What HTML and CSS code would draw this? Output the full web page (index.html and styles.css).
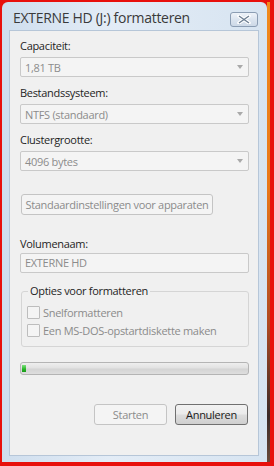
FILE: index.html
```html
<!DOCTYPE html>
<html>
  <head>
    <meta charset="UTF-8" />
    <link rel="stylesheet" href="styles.css">
  </head>
  <body>
    <div class="screen">
      <div class="window">
        <div class="titlebar">
          <span class="title">EXTERNE HD (J:) formatteren</span>
          <div class="close">
            <svg width="14" height="9" viewBox="0 0 14 9">
              <path d="M2 1 L12 8 M12 1 L2 8" stroke="#ffffff" stroke-width="3.4" stroke-linecap="round" />
              <path d="M2 1 L12 8 M12 1 L2 8" stroke="#6d7f93" stroke-width="1.4" />
            </svg>
          </div>
        </div>

        <div class="client">
          <p class="label first">Capaciteit:</p>
          <div class="combo">
            <span>1,81 TB</span>
            <i class="arrow"></i>
          </div>

          <p class="label">Bestandssysteem:</p>
          <div class="combo">
            <span>NTFS (standaard)</span>
            <i class="arrow"></i>
          </div>

          <p class="label">Clustergrootte:</p>
          <div class="combo">
            <span>4096 bytes</span>
            <i class="arrow"></i>
          </div>

          <div class="button wide disabled">Standaardinstellingen voor apparaten</div>

          <p class="label volume">Volumenaam:</p>
          <div class="textbox">EXTERNE HD</div>

          <div class="group">
            <span class="legend">Opties voor formatteren</span>
            <div class="check">
              <i class="box"></i>
              <span>Snelformatteren</span>
            </div>
            <div class="check">
              <i class="box"></i>
              <span>Een MS-DOS-opstartdiskette maken</span>
            </div>
          </div>

          <div class="progress">
            <div class="fill"></div>
          </div>

          <div class="actions">
            <div class="button disabled">Starten</div>
            <div class="button default">Annuleren</div>
          </div>
        </div>
      </div>
      <div class="strip"></div>
    </div>
  </body>
</html>
```

FILE: styles.css
```css
* {
  box-sizing: border-box;
}

body {
  margin: 0;
  padding: 0;
  background-color: #e8100c;
  font-family: "Open Sans", "Noto Sans", sans-serif;
  font-size: 11px;
  letter-spacing: -0.3px;
  color: #1e1e1e;
}

.screen {
  display: flex;
  width: 274px;
  height: 466px;
  padding: 2px 4px 4px 2px;
}

.strip {
  width: 3px;
  background: linear-gradient(180deg, #f08a1c 0%, #e9781a 40%, #b04a22 70%, #3a2a28 90%, #6a4a3a 100%);
}

.window {
  display: flex;
  flex-direction: column;
  width: 265px;
  height: 460px;
  padding: 0 8px 6px 7px;
  border-radius: 6px 6px 0 0;
  background-color: #d9e5f2;
  background-image: linear-gradient(90deg, #cfdeee 0%, #e3ecf6 40%, #d7e4f1 100%);
}

/* title bar */
.titlebar {
  display: flex;
  align-items: center;
  justify-content: space-between;
  height: 28px;
  padding: 0 0 0 4px;
}

.title {
  font-size: 14px;
  color: #3a3a3a;
  letter-spacing: -0.3px;
  padding-top: 2px;
}

.close {
  display: flex;
  align-items: center;
  justify-content: center;
  width: 28px;
  height: 15px;
  margin-right: 1px;
  margin-top: 6px;
  border: 1px solid #8b9db3;
  border-radius: 3px;
  background: linear-gradient(180deg, #eef3f9 0%, #dbe4ef 50%, #cdd9e7 100%);
}

/* client area */
.client {
  flex: 1;
  display: flex;
  flex-direction: column;
  padding: 0 9px 0 10px;
  border: 1px solid #b6c6d8;
  background-color: #f0f0f0;
}

.label {
  margin: 0;
  margin-top: 8px;
  height: 15px;
  line-height: 15px;
  white-space: nowrap;
}

.label.first {
  margin-top: 7px;
}

.label.volume {
  margin-top: 21px;
}

.combo {
  display: flex;
  align-items: center;
  justify-content: space-between;
  width: 229px;
  height: 20px;
  margin-top: 4px;
  padding: 0 5px 0 4px;
  border: 1px solid #c9c9c9;
  border-radius: 2px;
  background-color: #f4f4f4;
  color: #8c8c8c;
}

.arrow {
  width: 0;
  height: 0;
  border-left: 3.5px solid transparent;
  border-right: 3.5px solid transparent;
  border-top: 4px solid #a9a9a9;
}

.textbox {
  width: 229px;
  height: 20px;
  line-height: 18px;
  margin-top: 2px;
  padding: 0 4px;
  border: 1px solid #c9c9c9;
  border-radius: 2px;
  background-color: #f4f4f4;
  color: #8c8c8c;
}

.button {
  display: flex;
  align-items: center;
  justify-content: center;
  width: 73px;
  height: 21px;
  border-radius: 3px;
  white-space: nowrap;
}

.button.disabled {
  border: 1px solid #c4c4c4;
  background-color: #f4f4f4;
  color: #8b8b8b;
}

.button.default {
  border: 1px solid #707070;
  background: linear-gradient(180deg, #f2f2f2 0%, #ebebeb 48%, #dddddd 52%, #cfcfcf 100%);
  color: #1a1a1a;
}

.button.wide {
  width: 192px;
  margin-top: 23px;
  margin-left: 1px;
}

/* group box */
.group {
  position: relative;
  width: 228px;
  height: 56px;
  margin-top: 18px;
  margin-left: 1px;
  padding: 14px 0 0 5px;
  border: 1px solid #d5d5d5;
  border-radius: 3px;
}

.legend {
  position: absolute;
  top: -9px;
  left: 6px;
  padding: 0 2px;
  background-color: #f0f0f0;
  line-height: 16px;
}

.check {
  display: flex;
  align-items: center;
  height: 13px;
  margin-bottom: 5px;
  color: #8b8b8b;
}

.box {
  width: 13px;
  height: 13px;
  margin-right: 3px;
  border: 1px solid #bdbdbd;
  border-radius: 1px;
  background-color: #f4f4f4;
}

/* progress */
.progress {
  width: 229px;
  height: 13px;
  margin-top: 15px;
  padding: 2px 1px;
  border: 1px solid #b4b4b4;
  border-radius: 3px;
  background: linear-gradient(180deg, #eeeeee 0%, #e2e2e2 45%, #d4d4d4 55%, #dedede 100%);
}

.fill {
  width: 4px;
  height: 100%;
  background: linear-gradient(180deg, #7fe07f 0%, #26b526 60%, #1a9a1a 100%);
}

.actions {
  display: flex;
  justify-content: flex-end;
  gap: 8px;
  margin-top: 29px;
  padding-right: 1px;
}
```
